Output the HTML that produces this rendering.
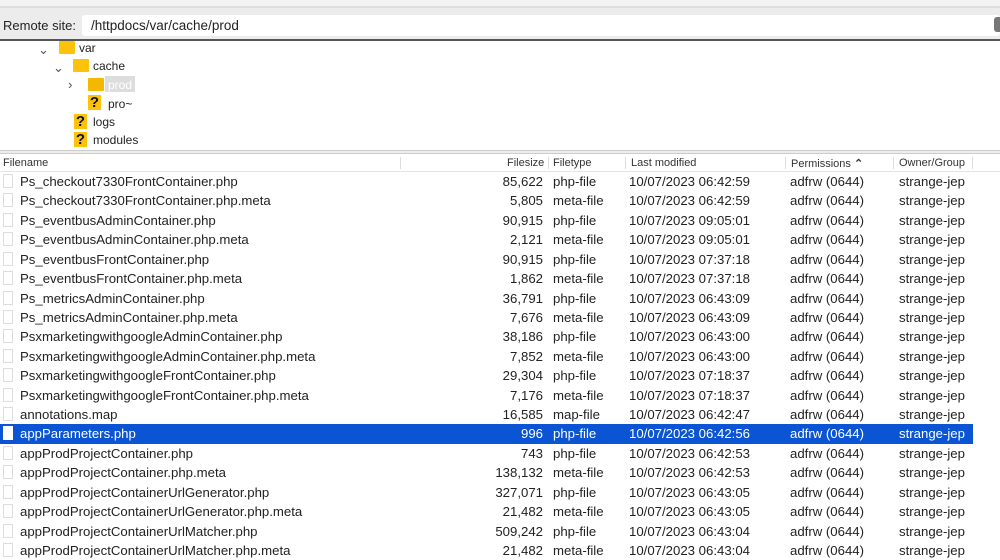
<!DOCTYPE html><html><head><style>
body{margin:0;width:1000px;height:559px;overflow:hidden;background:#fff;font-family:"Liberation Sans",sans-serif;font-size:13.2px;color:#222;position:relative}
.a{position:absolute;white-space:nowrap}
.row{position:absolute;left:0;width:973px;height:19.4px;line-height:19.4px}
.row span{position:absolute;white-space:nowrap}
.sel{background:#0b54d4;color:#fff}
.doc{position:absolute;left:3px;top:2px;width:10px;height:14px;border:1px solid #ddd;background:#fff;box-sizing:border-box}
.sel .doc{border-color:#fff}
.fold{position:absolute;width:16px;height:13px;background:#fcc20c;border-radius:1px}
.q{position:absolute;width:13px;height:15px;background:#fcc20c;font-weight:bold;font-size:15px;line-height:15px;text-align:center;color:#111}
.hd{position:absolute;top:157px;font-size:11px;color:#333}
.dv{position:absolute;top:157px;width:1px;height:12px;background:#ddd}
.t{font-size:12px}
</style></head><body>
<div class="a" style="left:0;top:0;width:1000px;height:6px;background:#f3f3f3"></div>
<div class="a" style="left:0;top:6px;width:1000px;height:2px;background:#ddd"></div>
<div class="a" style="left:0;top:8px;width:1000px;height:31px;background:#ececec"></div>
<div class="a" style="left:3px;top:18px;font-size:13px;color:#222">Remote site:</div>
<div class="a" style="left:82px;top:15px;width:918px;height:21px;background:#fff;border-radius:3px"></div>
<div class="a" style="left:91px;top:18px;font-size:13.5px">/httpdocs/var/cache/prod</div>
<div class="a" style="left:994px;top:17px;width:6px;height:15px;background:#777;border-radius:3px 0 0 3px"></div>
<div class="a" style="left:0;top:39px;width:1000px;height:2px;background:#555"></div>
<div class="a" style="left:38px;top:42px;color:#555">⌄</div>
<div class="fold" style="left:59px;top:41px"></div><div class="a t" style="left:79px;top:41px">var</div>
<div class="a" style="left:53px;top:60px;color:#555">⌄</div>
<div class="fold" style="left:73px;top:59px"></div><div class="a t" style="left:93px;top:59px">cache</div>
<div class="a" style="left:68px;top:77px;color:#555">›</div>
<div class="fold" style="left:88px;top:78px;background:#f5b800"></div>
<div class="a" style="left:105px;top:76px;width:30px;height:16px;background:#ddd"></div>
<div class="a t" style="left:108px;top:78px;color:#fff">prod</div>
<div class="q" style="left:88px;top:95px">?</div><div class="a t" style="left:108px;top:97px">pro~</div>
<div class="q" style="left:74px;top:114px">?</div><div class="a t" style="left:93px;top:115px">logs</div>
<div class="q" style="left:74px;top:132px">?</div><div class="a t" style="left:93px;top:133px">modules</div>
<div class="a" style="left:0;top:150px;width:1000px;height:4px;background:#ececec;border-top:1px solid #ccc;border-bottom:1px solid #ccc;box-sizing:border-box"></div>
<div class="hd" style="left:3px">Filename</div><div class="dv" style="left:400px"></div>
<div class="hd" style="left:507px">Filesize</div><div class="dv" style="left:548px"></div>
<div class="hd" style="left:553px">Filetype</div><div class="dv" style="left:625px"></div>
<div class="hd" style="left:631px">Last modified</div><div class="dv" style="left:785px"></div>
<div class="hd" style="left:791px">Permissions <b style="font-size:11px">⌃</b></div><div class="dv" style="left:893px"></div>
<div class="hd" style="left:899px">Owner/Group</div><div class="dv" style="left:972px"></div>
<div class="a" style="left:0;top:171px;width:1000px;height:1px;background:#e4e4e4"></div>
<div id="r"></div>
<script>
var d=[["Ps_checkout7330FrontContainer.php","85,622","php-file","10/07/2023 06:42:59"],
["Ps_checkout7330FrontContainer.php.meta","5,805","meta-file","10/07/2023 06:42:59"],
["Ps_eventbusAdminContainer.php","90,915","php-file","10/07/2023 09:05:01"],
["Ps_eventbusAdminContainer.php.meta","2,121","meta-file","10/07/2023 09:05:01"],
["Ps_eventbusFrontContainer.php","90,915","php-file","10/07/2023 07:37:18"],
["Ps_eventbusFrontContainer.php.meta","1,862","meta-file","10/07/2023 07:37:18"],
["Ps_metricsAdminContainer.php","36,791","php-file","10/07/2023 06:43:09"],
["Ps_metricsAdminContainer.php.meta","7,676","meta-file","10/07/2023 06:43:09"],
["PsxmarketingwithgoogleAdminContainer.php","38,186","php-file","10/07/2023 06:43:00"],
["PsxmarketingwithgoogleAdminContainer.php.meta","7,852","meta-file","10/07/2023 06:43:00"],
["PsxmarketingwithgoogleFrontContainer.php","29,304","php-file","10/07/2023 07:18:37"],
["PsxmarketingwithgoogleFrontContainer.php.meta","7,176","meta-file","10/07/2023 07:18:37"],
["annotations.map","16,585","map-file","10/07/2023 06:42:47"],
["appParameters.php","996","php-file","10/07/2023 06:42:56"],
["appProdProjectContainer.php","743","php-file","10/07/2023 06:42:53"],
["appProdProjectContainer.php.meta","138,132","meta-file","10/07/2023 06:42:53"],
["appProdProjectContainerUrlGenerator.php","327,071","php-file","10/07/2023 06:43:05"],
["appProdProjectContainerUrlGenerator.php.meta","21,482","meta-file","10/07/2023 06:43:05"],
["appProdProjectContainerUrlMatcher.php","509,242","php-file","10/07/2023 06:43:04"],
["appProdProjectContainerUrlMatcher.php.meta","21,482","meta-file","10/07/2023 06:43:04"]];
var h="";d.forEach(function(r,i){h+='<div class="row'+(i==13?' sel':'')+'" style="top:'+(172+i*19.42)+'px"><div class="doc"></div><span style="left:20px">'+r[0]+'</span><span style="right:430px">'+r[1]+'</span><span style="left:553px">'+r[2]+'</span><span style="left:629px">'+r[3]+'</span><span style="left:790px">adfrw (0644)</span><span style="left:899px">strange-jep</span></div>';});
document.getElementById("r").innerHTML=h;
</script>
</body></html>
